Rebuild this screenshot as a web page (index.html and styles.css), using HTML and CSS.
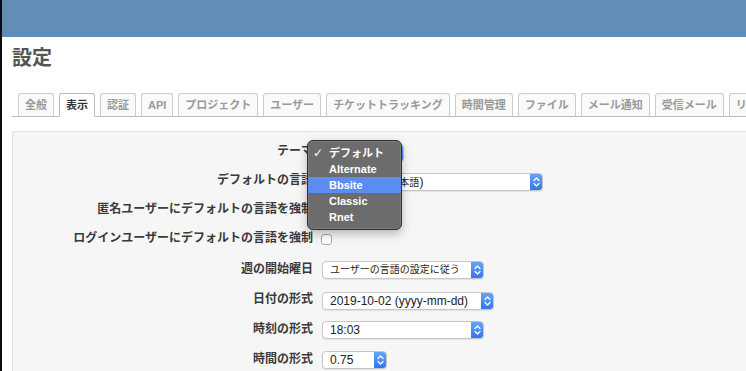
FILE: index.html
```html
<!DOCTYPE html>
<html>
<head>
  <meta charset="utf-8">
  <title>設定 - Redmine</title>
  <link rel="stylesheet" href="styles.css">
</head>
<body>
  <header></header>
  <main>
    <h2>設定</h2>
    <ul class="tabs">
      <li><a>全般</a></li>
      <li><a class="selected">表示</a></li>
      <li><a>認証</a></li>
      <li><a>API</a></li>
      <li><a>プロジェクト</a></li>
      <li><a>ユーザー</a></li>
      <li><a>チケットトラッキング</a></li>
      <li><a>時間管理</a></li>
      <li><a>ファイル</a></li>
      <li><a>メール通知</a></li>
      <li><a>受信メール</a></li>
      <li><a>リポジトリ</a></li>
    </ul>
    <div class="box">
      <label>テーマ</label>
      <div class="control theme">
        <div class="select w-theme"><span class="value ja">デフォルト</span><span class="arrow"><svg viewBox="0 0 13 18" width="13" height="18"><path d="M4 7.5 L6.5 5 L9 7.5 M4 10.5 L6.5 13 L9 10.5" fill="none" stroke="#fff" stroke-width="1.3" stroke-linecap="round" stroke-linejoin="round"/></svg></span></div>
        <ul class="menu">
          <li><span class="check">✓</span>デフォルト</li>
          <li>Alternate</li>
          <li class="hover">Bbsite</li>
          <li>Classic</li>
          <li>Rnet</li>
        </ul>
      </div>

      <label>デフォルトの言語</label>
      <div class="control">
        <div class="select w-lang"><span class="value">Japanese (<span class="ja">日本語</span>)</span><span class="arrow"><svg viewBox="0 0 13 18" width="13" height="18"><path d="M4 7.5 L6.5 5 L9 7.5 M4 10.5 L6.5 13 L9 10.5" fill="none" stroke="#fff" stroke-width="1.3" stroke-linecap="round" stroke-linejoin="round"/></svg></span></div>
      </div>

      <label>匿名ユーザーにデフォルトの言語を強制</label>
      <div class="control"><span class="checkbox"></span></div>

      <label>ログインユーザーにデフォルトの言語を強制</label>
      <div class="control"><span class="checkbox"></span></div>

      <label>週の開始曜日</label>
      <div class="control">
        <div class="select w-week"><span class="value ja">ユーザーの言語の設定に従う</span><span class="arrow"><svg viewBox="0 0 13 18" width="13" height="18"><path d="M4 7.5 L6.5 5 L9 7.5 M4 10.5 L6.5 13 L9 10.5" fill="none" stroke="#fff" stroke-width="1.3" stroke-linecap="round" stroke-linejoin="round"/></svg></span></div>
      </div>

      <label>日付の形式</label>
      <div class="control">
        <div class="select w-date"><span class="value">2019-10-02 (yyyy-mm-dd)</span><span class="arrow"><svg viewBox="0 0 13 18" width="13" height="18"><path d="M4 7.5 L6.5 5 L9 7.5 M4 10.5 L6.5 13 L9 10.5" fill="none" stroke="#fff" stroke-width="1.3" stroke-linecap="round" stroke-linejoin="round"/></svg></span></div>
      </div>

      <label>時刻の形式</label>
      <div class="control">
        <div class="select w-week"><span class="value">18:03</span><span class="arrow"><svg viewBox="0 0 13 18" width="13" height="18"><path d="M4 7.5 L6.5 5 L9 7.5 M4 10.5 L6.5 13 L9 10.5" fill="none" stroke="#fff" stroke-width="1.3" stroke-linecap="round" stroke-linejoin="round"/></svg></span></div>
      </div>

      <label>時間の形式</label>
      <div class="control">
        <div class="select w-hours"><span class="value">0.75</span><span class="arrow"><svg viewBox="0 0 13 18" width="13" height="18"><path d="M4 7.5 L6.5 5 L9 7.5 M4 10.5 L6.5 13 L9 10.5" fill="none" stroke="#fff" stroke-width="1.3" stroke-linecap="round" stroke-linejoin="round"/></svg></span></div>
      </div>
    </div>
  </main>
</body>
</html>
```

FILE: styles.css
```css
* {
  margin: 0;
  padding: 0;
  box-sizing: border-box;
}

html, body {
  height: 100%;
  overflow: hidden;
}

body {
  font-family: "Liberation Sans", "Noto Sans CJK JP", sans-serif;
  background: #fff;
  color: #444;
  border-left: 2px solid #0d0d0d;
}

header {
  height: 37px;
  background: #628db6;
}

main {
  padding-left: 10px;
}

h2 {
  padding-top: 9px;
  font-size: 20px;
  line-height: 24px;
  font-weight: bold;
  color: #555;
}

/* tabs */
.tabs {
  list-style: none;
  display: flex;
  height: 24px;
  margin-top: 23px;
  padding-left: 6px;
  border-bottom: 1px solid #bbb;
  white-space: nowrap;
}

.tabs li {
  flex-shrink: 0;
  margin-right: 5px;
}

.tabs a {
  display: block;
  height: 24px;
  padding: 4px 6px;
  font-size: 11px;
  line-height: 14px;
  font-weight: bold;
  color: #999;
  background: #fafafa;
  border: 1px solid #ccc;
  border-bottom-color: #bbb;
  border-radius: 3px 3px 0 0;
}

.tabs a.selected {
  color: #333;
  background: #fff;
  border-color: #bbb;
  border-bottom-color: #fff;
}

/* settings box */
.box {
  margin-top: 14px;
  margin-right: -10px;
  height: 400px;
  padding-top: 6px;
  background: #f6f6f6;
  border: 1px solid #e4e4e4;
  display: grid;
  grid-template-columns: 300px auto;
  grid-template-rows: 29px 29px 28px 30px 32px 29px 30px 30px;
  align-content: start;
  align-items: center;
  column-gap: 8px;
}

.box label {
  text-align: right;
  font-size: 12px;
  line-height: 16px;
  font-weight: bold;
  color: #3a3a3a;
  padding-bottom: 3px;
  white-space: nowrap;
}

.control {
  display: flex;
  align-items: center;
}

.control.theme {
  position: relative;
}

.select {
  display: flex;
  height: 18px;
  margin-left: 1px;
  background: #fff;
  border: 1px solid #c6c6c6;
  border-radius: 4px;
  box-shadow: 0 1px 1px rgba(0, 0, 0, 0.08);
  overflow: hidden;
}

.select .value {
  flex: 1;
  padding-left: 7px;
  font-size: 12px;
  line-height: 16px;
  color: #222;
  white-space: nowrap;
  overflow: hidden;
}

.select .ja {
  font-size: 10px;
}

.select .arrow {
  width: 13px;
  height: 18px;
  margin-top: -1px;
  margin-right: -1px;
  background: linear-gradient(#6aa6fb, #2f73ee);
  border-radius: 0 4px 4px 0;
}

.select svg {
  display: block;
}

.w-theme { width: 82px; }
.w-lang { width: 221px; }
.w-week { width: 162px; }
.w-date { width: 172px; }
.w-hours { width: 65px; }

.checkbox {
  display: block;
  width: 11px;
  height: 11px;
  background: #fff;
  border: 1px solid #a9a9a9;
  border-radius: 3px;
  margin-top: 1px;
}

/* open popup menu of the theme select */
.menu {
  position: absolute;
  left: -14px;
  top: -4px;
  width: 95px;
  padding: 4px 0;
  list-style: none;
  background: #6c6c6c;
  border: 1px solid #2e2e2e;
  border-radius: 6px;
  box-shadow: inset 0 0 0 1px rgba(255, 255, 255, 0.12), 0 4px 10px rgba(0, 0, 0, 0.25);
}

.menu li {
  position: relative;
  height: 16px;
  padding-left: 21px;
  font-size: 11px;
  line-height: 16px;
  font-weight: bold;
  color: #fff;
}

.menu li.hover {
  background: #5a8cf2;
}

.menu .check {
  position: absolute;
  left: 5px;
  top: 0;
  font-family: "DejaVu Sans", sans-serif;
  font-size: 12px;
  font-weight: bold;
}
```
